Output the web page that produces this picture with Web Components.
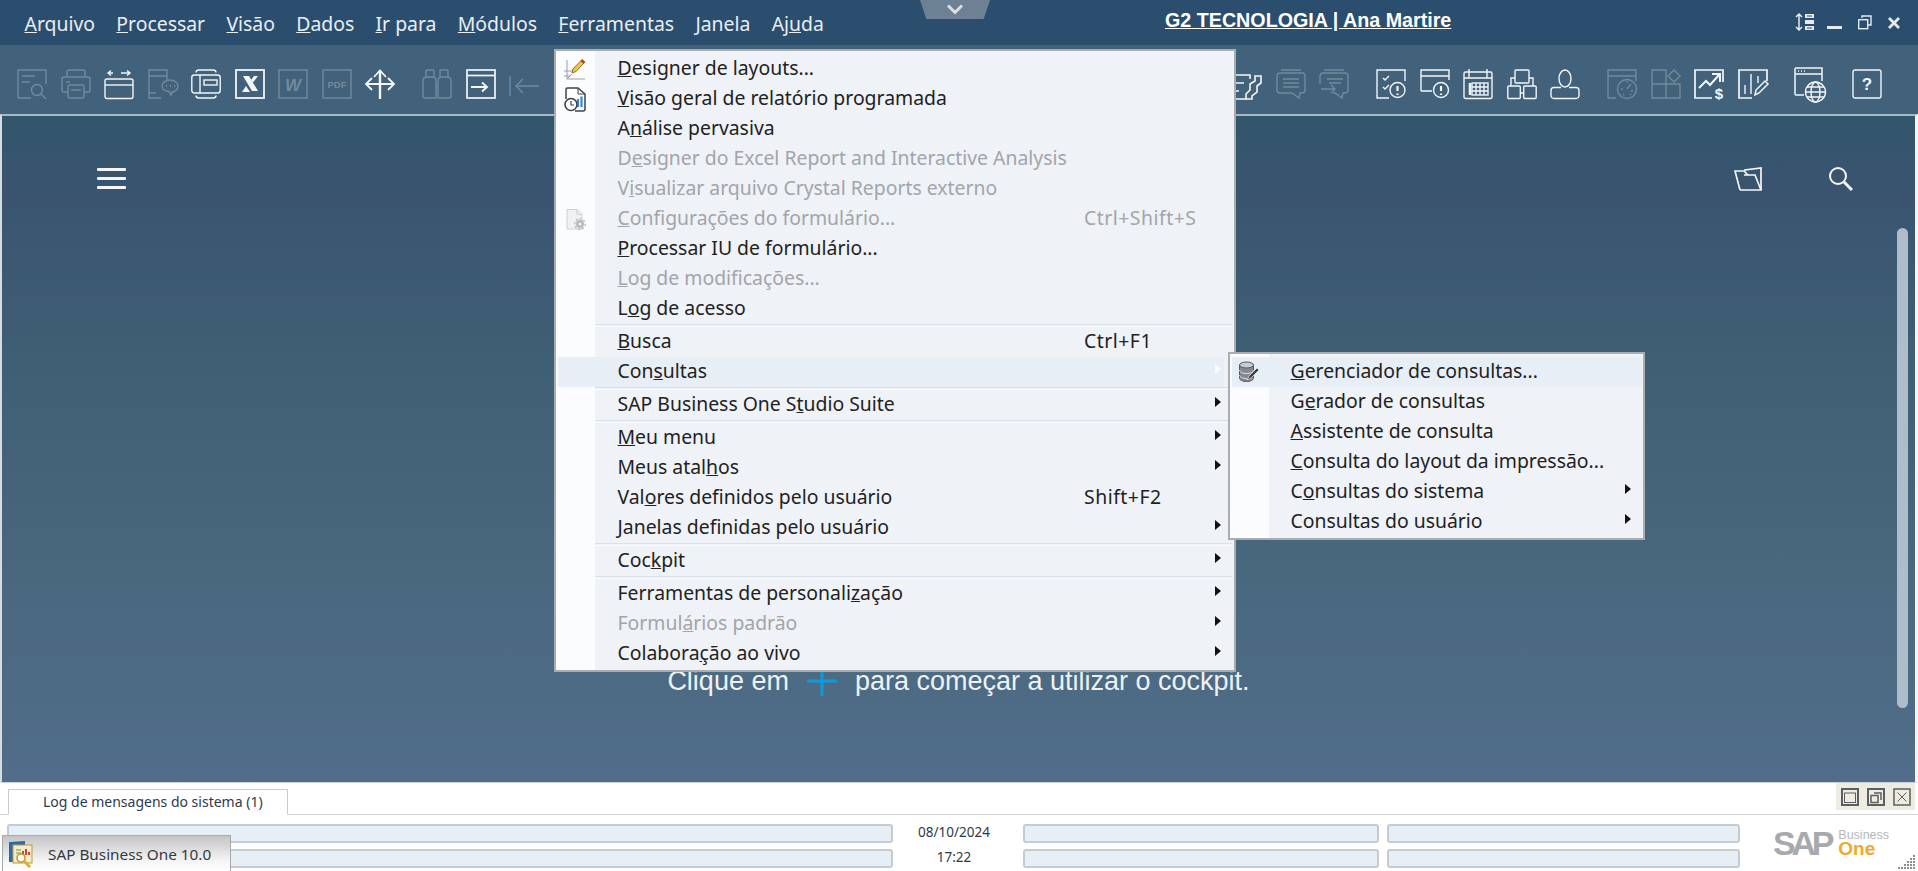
<!DOCTYPE html>
<html lang="pt-BR">
<head>
<meta charset="utf-8">
<title>SAP Business One 10.0</title>
<style>
	html, body { margin: 0; height: 100%; overflow: hidden; background: #fff; }
</style>
</head>
<body>
<sap-app>
	<sap-titlebar>
		<sap-menubar>
			<span><u>A</u>rquivo</span>
			<span><u>P</u>rocessar</span>
			<span><u>V</u>isão</span>
			<span><u>D</u>ados</span>
			<span><u>I</u>r para</span>
			<span><u>M</u>ódulos</span>
			<span><u>F</u>erramentas</span>
			<span><u>J</u>anela</span>
			<span>Aj<u>u</u>da</span>
		</sap-menubar>
	</sap-titlebar>

	<sap-toolbar>
		<sap-icon name="preview" off></sap-icon>
		<sap-icon name="printer" off></sap-icon>
		<sap-icon name="resize"></sap-icon>
		<sap-icon name="docchat" off></sap-icon>
		<sap-icon name="layout"></sap-icon>
		<sap-icon name="excel"></sap-icon>
		<sap-icon name="word" off></sap-icon>
		<sap-icon name="pdf" off></sap-icon>
		<sap-icon name="move"></sap-icon>
		<sap-tb-gap></sap-tb-gap>
		<sap-icon name="binoculars" off></sap-icon>
		<sap-icon name="goto"></sap-icon>
		<sap-icon name="first" off></sap-icon>
		<sap-tb-gap style="width:666px"></sap-tb-gap>
		<sap-icon name="wrench"></sap-icon>
		<sap-icon name="chat" off></sap-icon>
		<sap-icon name="chatsend" off></sap-icon>
		<sap-tb-gap></sap-tb-gap>
		<sap-icon name="checkalert"></sap-icon>
		<sap-icon name="windowalert"></sap-icon>
		<sap-icon name="calendar"></sap-icon>
		<sap-icon name="org"></sap-icon>
		<sap-icon name="person"></sap-icon>
		<sap-tb-gap></sap-tb-gap>
		<sap-icon name="gauge" off></sap-icon>
		<sap-icon name="blocks" off></sap-icon>
		<sap-icon name="chartmoney"></sap-icon>
		<sap-icon name="barspen"></sap-icon>
		<sap-tb-gap style="width:0"></sap-tb-gap>
		<sap-icon name="web"></sap-icon>
		<sap-tb-gap style="width:.5px"></sap-tb-gap>
		<sap-icon name="help"></sap-icon>
	</sap-toolbar>

	<sap-cockpit></sap-cockpit>

	<sap-statusbar>
		<span slot="tab">Log de mensagens do sistema (1)</span>
		<span slot="date">08/10/2024</span>
		<span slot="time">17:22</span>
	</sap-statusbar>

	<sap-taskitem>SAP Business One 10.0</sap-taskitem>

	<sap-menu style="left:554px;top:49px;width:678px;--cols:61.500px 466.500px 118px 32px;--hl-right:10px">
		<sap-menu-item>
			<svg slot="icon" width="24" height="23" viewBox="0 0 24 23" fill="none"><path d="M4 2v19h18M1 18h6M1 13h9M4 21l5-5" stroke="#9a9fa6"/><path d="M9 15l1-4L19 1.5l3 2.5-9 9.500z" fill="#f2c53c" stroke="#6f5a1e" stroke-width=".8"/><path d="M19 1.500l3 2.500-1.500 1.800-3-2.500z" fill="#b5412c"/></svg>
			<u>D</u>esigner de layouts...
		</sap-menu-item>
		<sap-menu-item>
			<svg slot="icon" width="24" height="25" viewBox="0 0 24 25" fill="none"><path d="M3 12V2.500A1.500 1.500 0 0 1 4.500 1H15l7 6v15a2 2 0 0 1-2 2h-8" stroke="#3f4347" stroke-width="1.500" fill="#fff"/><path d="M15 1v6h7" stroke="#3f4347"/><path d="M15 12v8M18.500 9.500V20" stroke="#3a86cf" stroke-width="2.200"/><circle cx="8" cy="17.500" r="6" fill="#fff" stroke="#3f4347" stroke-width="1.600"/><path d="M8 14v4h3" stroke="#3f4347" stroke-width="1.200"/></svg>
			<u>V</u>isão geral de relatório programada
		</sap-menu-item>
		<sap-menu-item>A<u>n</u>álise pervasiva</sap-menu-item>
		<sap-menu-item disabled>D<u>e</u>signer do Excel Report and Interactive Analysis</sap-menu-item>
		<sap-menu-item disabled>V<u>i</u>sualizar arquivo Crystal Reports externo</sap-menu-item>
		<sap-menu-item disabled shortcut="Ctrl+Shift+S">
			<svg slot="icon" width="24" height="23" viewBox="0 0 24 23" fill="none"><path d="M4 1.500h10l5 5V21H4z" fill="#f0f1f3" stroke="#cdd0d4"/><path d="M14 1.500v5h5" stroke="#cdd0d4"/><circle cx="17" cy="16" r="4" fill="#b7babf"/><circle cx="17" cy="16" r="5.300" stroke="#b7babf" stroke-width="1.400" stroke-dasharray="2 2"/><circle cx="17" cy="16" r="1.500" fill="#f0f1f3"/></svg>
			<u>C</u>onfigurações do formulário...
		</sap-menu-item>
		<sap-menu-item><u>P</u>rocessar IU de formulário...</sap-menu-item>
		<sap-menu-item disabled><u>L</u>og de modificações...</sap-menu-item>
		<sap-menu-item>L<u>o</u>g de acesso</sap-menu-item>
		<sap-menu-sep></sap-menu-sep>
		<sap-menu-item shortcut="Ctrl+F1"><u>B</u>usca</sap-menu-item>
		<sap-menu-item hover arrow>Con<u>s</u>ultas</sap-menu-item>
		<sap-menu-sep></sap-menu-sep>
		<sap-menu-item arrow>SAP Business One S<u>t</u>udio Suite</sap-menu-item>
		<sap-menu-sep></sap-menu-sep>
		<sap-menu-item arrow><u>M</u>eu menu</sap-menu-item>
		<sap-menu-item arrow>Meus atal<u>h</u>os</sap-menu-item>
		<sap-menu-item shortcut="Shift+F2">Val<u>o</u>res definidos pelo usuário</sap-menu-item>
		<sap-menu-item arrow><u>J</u>anelas definidas pelo usuário</sap-menu-item>
		<sap-menu-sep></sap-menu-sep>
		<sap-menu-item arrow>Coc<u>k</u>pit</sap-menu-item>
		<sap-menu-sep></sap-menu-sep>
		<sap-menu-item arrow>Ferramentas de personali<u>z</u>ação</sap-menu-item>
		<sap-menu-item disabled arrow>Formul<u>á</u>rios padrão</sap-menu-item>
		<sap-menu-item arrow>Colabora<u>ç</u>ão ao vivo</sap-menu-item>
	</sap-menu>

	<sap-menu style="left:1228px;top:352px;width:413px;--cols:60.500px 322.500px 0 30px;--hl-right:1px">
		<sap-menu-item hover>
			<svg slot="icon" width="22" height="22" viewBox="0 0 22 22" fill="none"><path d="M1.500 4v13c0 2 3 3.500 7 3.500s7-1.500 7-3.500V4" fill="#85898f" stroke="#55585c"/><ellipse cx="8.500" cy="4" rx="7" ry="3" fill="#c9ccd0" stroke="#55585c"/><path d="M1.500 9c0 2 3 3.500 7 3.500s7-1.500 7-3.500M1.500 14c0 2 3 3.500 7 3.500" stroke="#e3e5e8"/><path d="M9 19l2-4 8-8 2 2-8 8z" fill="#3c3f43" stroke="#f1f3f6" stroke-width=".7"/></svg>
			<u>G</u>erenciador de consultas...
		</sap-menu-item>
		<sap-menu-item>G<u>e</u>rador de consultas</sap-menu-item>
		<sap-menu-item><u>A</u>ssistente de consulta</sap-menu-item>
		<sap-menu-item><u>C</u>onsulta do layout da impressão...</sap-menu-item>
		<sap-menu-item arrow>C<u>o</u>nsultas do sistema</sap-menu-item>
		<sap-menu-item arrow>Consultas do usuário</sap-menu-item>
	</sap-menu>
</sap-app>

<script>
const SAP_ICONS = {
	preview: `<path d="M1 29V1h28v14M1 29h13M5 7h13M5 13h8"/><circle cx="20" cy="21" r="5.500"/><path d="M24 25l5 5"/>`,
	printer: `<path d="M6 8V3a2 2 0 0 1 2-2h14a2 2 0 0 1 2 2v5"/><path d="M7 23H3a2 2 0 0 1-2-2V10a2 2 0 0 1 2-2h24a2 2 0 0 1 2 2v11a2 2 0 0 1-2 2h-4"/><rect x="7" y="16" width="16" height="13" rx="1.500"/><path d="M5 13h4M10 21h10"/>`,
	resize: `<path d="M9 4H4M7 1.500L4 4l3 2.500M17 4h9M23 1.500L26 4l-3 2.500"/><rect x="1" y="10" width="28" height="19.500" rx="2"/><path d="M1 16h28"/>`,
	docchat: `<path d="M19 11V1H1v28h12M1 7h18M1 24h7"/><path d="M14 17c0-3.500 4-6 8-6s8 2.500 8 6-3 6-6 6l-1 3-2-3.500c-4-.5-7-2-7-5.500z"/><path d="M18 17h1M22 17h1M26 17h1" stroke-width="2"/>`,
	layout: `<rect x=".8" y="6" width="28.400" height="18" rx="2.500"/><path d="M5 3.500Q5 1 8 1h14q3 0 3 2.500M5 26.500Q5 29 8 29h14q3 0 3-2.500M9 6v18"/><rect x="13" y="11" width="13" height="5"/>`,
	excel: `<rect x="1" y="1" width="28" height="28" stroke-width="1.800"/><path d="M8 7h6l9 15h-6z" fill="currentColor" stroke="none"/><path d="M19 7h4l-5 6.500-2-2.500zM7 23l4-6 4 6z" fill="currentColor" stroke="none"/>`,
	word: `<rect x="1" y="1" width="28" height="28"/><text x="15" y="22" text-anchor="middle" font-family="Liberation Sans" font-size="17" font-weight="700" font-style="italic" fill="currentColor" stroke="none">W</text>`,
	pdf: `<rect x="1" y="1" width="28" height="28"/><text x="15" y="19" text-anchor="middle" font-family="Liberation Sans" font-size="9.500" font-weight="700" fill="currentColor" stroke="none">PDF</text>`,
	move: `<path d="M15 1v29" stroke-width="2.400"/><path d="M1.500 15h27M9 8l6-6.500L21 8M7 9l-6 6 6 6M23 9l6 6-6 6" stroke-width="1.800"/>`,
	binoculars: `<path d="M4 8V2a1 1 0 0 1 1-1h6a1 1 0 0 1 1 1v6M18 8V2a1 1 0 0 1 1-1h6a1 1 0 0 1 1 1v6"/><path d="M1 27V12q0-4 4-4h6q3 0 3 4v17H3a2 2 0 0 1-2-2zM29 27V12q0-4-4-4h-6q-3 0-3 4v17h11a2 2 0 0 0 2-2zM14 17h2"/>`,
	goto: `<rect x="1" y="1" width="28" height="28" stroke-width="1.700"/><path d="M1 6.500h28" stroke-width="1.700"/><path d="M5 18h15M16 13.500l5 4.500-5 4.500" stroke-width="1.900"/>`,
	first: `<path d="M1 7v20M7 17h23M14 10l-7 7 7 7"/>`,
	wrench: `<path d="M0 6h18v4M0 14h12M0 22h7M0 30h14" stroke-width="1.600"/><path d="M23 7h6v7l-4 3v6l-5 4v3h-6v-5l4-4v-6l5-3z" stroke-width="1.600"/>`,
	chat: `<path d="M4 4h22a3 3 0 0 1 3 3v14a3 3 0 0 1-3 3h-2l-1 5-7-5H4a3 3 0 0 1-3-3V7a3 3 0 0 1 3-3zM5 1h20M7 10h16M7 14h16M7 18h16"/>`,
	chatsend: `<path d="M4 4h22a3 3 0 0 1 3 3v14a3 3 0 0 1-3 3h-2l-1 5-7-5h-2M1 15V7a3 3 0 0 1 3-3M5 1h20M8 10h16M10 14h12M2 20h14M12 16l4 4-4 4"/>`,
	checkalert: `<path d="M13 29H1V1h28v11"/><path d="M7 9l2 2 4-4M7 18l2 2 4-4"/><circle cx="21.500" cy="21" r="7.500"/><path d="M21.500 17v5M21.500 24.500v1.500" stroke-width="2.200"/>`,
	windowalert: `<path d="M1 22V1h28v10M1 7h28M1 22h11"/><circle cx="21" cy="21" r="7.500"/><path d="M21 17v5M21 24.500v1.500" stroke-width="2.200"/>`,
	calendar: `<rect x="1" y="3" width="28" height="26.500" rx="1.500"/><path d="M1 9h28M6 0v9M24 0v9"/><rect x="9" y="14" width="16" height="12"/><path d="M13 14v12M17 14v12M21 14v12M9 18h16M9 22h16"/><path d="M7 14v12" stroke-width="2.500"/>`,
	org: `<rect x="8" y="1" width="14" height="13" rx="1"/><rect x=".8" y="17" width="12.500" height="12.500" rx="1"/><rect x="16.700" y="17" width="12.500" height="12.500" rx="1"/><path d="M8 9H4v8M22 9h4v8M13 24h4"/>`,
	person: `<ellipse cx="15" cy="9.500" rx="6" ry="8.500"/><path d="M11 18.500H4a3 3 0 0 0-3 3v5a3 3 0 0 0 3 3h22a3 3 0 0 0 3-3v-5a3 3 0 0 0-3-3h-7"/>`,
	gauge: `<path d="M1 29V1h28v11M1 7h28M1 29h8"/><circle cx="20" cy="20" r="9.500"/><path d="M20 20l4-5M14 20h2M24 22h2M20 12v2M16 26l1-1M24 26l-1-1"/>`,
	blocks: `<path d="M1 1h14v28H1zM1 15h28v14H15"/><path d="M23 1l6 6-6 6-6-6z"/>`,
	chartmoney: `<path d="M29 13V1H1v28h17" stroke-width="1.700"/><path d="M5 19l7-7 4 4 9-10M18 5h8v8" stroke-width="2"/><text x="25" y="30" text-anchor="middle" font-family="Liberation Sans" font-size="15" font-weight="700" fill="currentColor" stroke="none">$</text>`,
	barspen: `<path d="M29 12V1H1v28h13" stroke-width="1.700"/><path d="M7 16v9M13 5v20M20 7v7"/><path d="M17 26l1-5 9-9 3 3-9 9z" stroke-width="1.500"/>`,
	web: `<g transform="translate(-2 1)"><path d="M2 24V-1a1 1 0 0 1 1-1h26v13M2 4h27" stroke-width="1.500"/><path d="M5 1h1M8 1h1M11 1h1" stroke-width="1.500"/><path d="M2 24a1 1 0 0 0 1 1h8"/><circle cx="22.500" cy="22" r="10" fill="#42617a"/><ellipse cx="22.500" cy="22" rx="4.500" ry="10"/><path d="M12.500 22h20M14 17h17M14 27h17"/></g>`,
	help: `<rect x="1" y="1" width="28" height="28" rx="2"/><text x="15" y="21" text-anchor="middle" font-family="Liberation Sans" font-size="17" font-weight="700" fill="currentColor" stroke="none">?</text>`,
};

class SapElement extends HTMLElement {
	static tag = "";
	static css = "";
	static html = "<slot></slot>";
	static register() {
		customElements.define(this.tag, this);
	}
	constructor() {
		super();
		this.attachShadow({ mode: "open" });
		this.shadowRoot.innerHTML = `<style>${this.constructor.css}</style>${this.constructor.html}`;
	}
}

class SapApp extends SapElement {
	static tag = "sap-app";
	static css = `
		:host {
			display: flex;
			flex-direction: column;
			height: 871px;
			position: relative;
			overflow: hidden;
			font-family: "Noto Sans", "Open Sans", sans-serif;
		}
	`;
}

class SapTitlebar extends SapElement {
	static tag = "sap-titlebar";
	static css = `
		:host {
			display: grid;
			grid-template-columns: 1165px auto 1fr auto;
			align-items: start;
			height: 45px;
			flex: none;
			background: #2b4e6e;
			position: relative;
		}
		.title {
			color: #fff;
			font: 700 19.700px/1 "Liberation Sans", sans-serif;
			text-decoration: underline;
			margin-top: 11px;
			white-space: nowrap;
		}
		.handle {
			position: absolute;
			left: 920px;
			top: 0;
			width: 70px;
			height: 19px;
			background: #6c8194;
			clip-path: polygon(0 0, 100% 0, 91% 100%, 9% 100%);
		}
		.handle svg { display: block; margin: 4px auto 0; }
		.win {
			display: flex;
			grid-column: 4;
			align-items: flex-start;
			gap: 13px;
			padding: 13px 18px 0 0;
			color: #e6ebef;
		}
	`;
	static html = `
		<div><slot></slot></div>
		<div class="title">G2 TECNOLOGIA | Ana Martire</div>
		<div class="win">
			<svg width="19" height="18" viewBox="0 0 19 18" fill="none" stroke="currentColor"><path d="M4 1v16M1 4l3-3 3 3M1 14l3 3 3-3" stroke-width="1.500"/><path d="M10 1h9v4h-9zM10 7h9v4h-9zM10 13h9v4h-9z" fill="currentColor" stroke="none"/><path d="M12 3h5M12 15h5" stroke="#2b4e6e"/></svg>
			<svg width="15" height="18" viewBox="0 0 15 18" style="margin-right:3px"><rect y="13" width="15" height="3" fill="currentColor"/></svg>
			<svg width="14" height="16" viewBox="0 0 14 16" fill="none" stroke="currentColor" stroke-width="1.400" style="margin:2px 3px 0 0"><rect x=".7" y="4.700" width="9" height="9"/><path d="M4 3V1h9v9h-3"/></svg>
			<svg width="12" height="12" viewBox="0 0 12 12" fill="none" stroke="currentColor" stroke-width="2.800" style="margin:4px 0 0"><path d="M1 1l10 10M11 1L1 11"/></svg>
		</div>
		<div class="handle"><svg width="18" height="11" viewBox="0 0 18 11" fill="none" stroke="#d8dfe5" stroke-width="3"><path d="M2 1.500l7 7 7-7"/></svg></div>
	`;
}

class SapMenubar extends SapElement {
	static tag = "sap-menubar";
	static css = `
		:host {
			display: flex;
			gap: 21.300px;
			padding: 10px 0 0 24.500px;
			color: #e9eef2;
			font-size: 19.400px;
			line-height: 27px;
			white-space: nowrap;
		}
	`;
}

class SapToolbar extends SapElement {
	static tag = "sap-toolbar";
	static css = `
		:host {
			display: flex;
			align-items: flex-start;
			gap: 13.5px;
			height: 69px;
			flex: none;
			box-sizing: border-box;
			padding: 24px 0 0 17px;
			background: #42617a;
		}
	`;
}

class SapTbGap extends SapElement {
	static tag = "sap-tb-gap";
	static css = `:host { display: block; width: 0; flex: none; }`;
	static html = "";
}

class SapIcon extends SapElement {
	static tag = "sap-icon";
	static css = `
		:host { display: block; width: 30px; height: 30px; flex: none; color: #f3f6f8; }
		:host([off]) { color: #728a9c; }
		svg { display: block; overflow: visible; fill: none; stroke: currentColor; stroke-width: 1.400; }
	`;
	static html = "";
	connectedCallback() {
		const body = SAP_ICONS[this.getAttribute("name")] || "";
		this.shadowRoot.innerHTML = `<style>${SapIcon.css}</style><svg width="30" height="30" viewBox="0 0 30 30">${body}</svg>`;
	}
}

class SapCockpit extends SapElement {
	static tag = "sap-cockpit";
	static css = `
		:host {
			display: flex;
			flex-direction: column;
			flex: 1;
			min-height: 0;
			position: relative;
			box-sizing: border-box;
			border-top: 2px solid #a9b9c6;
			border-left: 2px solid #d5dde3;
			border-right: 3px solid #f4f6f8;
			border-bottom: 1px solid #c9d3dc;
			background: linear-gradient(#31566b 0, #3a5470 11%, #3f5f74 37%, #4b6980 75%, #516d8a 100%);
		}
		.top {
			display: flex;
			align-items: center;
			padding: 50px 62px 0 95px;
			color: #f4f6f8;
		}
		.top .menu { margin-right: auto; }
		.top .folder { margin-right: 66px; }
		.msg {
			display: flex;
			align-items: center;
			justify-content: center;
			gap: 18px;
			margin-top: auto;
			padding: 0 0 86px;
			color: #eef2f5;
			font: 27px/30px "Liberation Sans", sans-serif;
		}
		.scroll {
			position: absolute;
			right: 7px;
			top: 112px;
			bottom: 74px;
			width: 11px;
			border-radius: 6px;
			background: #aebdc9;
		}
	`;
	static html = `
		<div class="top">
			<svg class="menu" width="29" height="21" viewBox="0 0 29 21" fill="currentColor"><rect width="29" height="3" y="0" rx="1"/><rect width="29" height="3" y="9" rx="1"/><rect width="29" height="3" y="18" rx="1"/></svg>
			<svg class="folder" width="28" height="24" viewBox="0 0 28 24" fill="none" stroke="currentColor" stroke-width="1.700"><path d="M6 23L1 4h9l4 4"/><path d="M11 4V3L27 1v22H6"/><path d="M27 23L21 8H10"/></svg>
			<svg width="25" height="25" viewBox="0 0 25 25" fill="none" stroke="currentColor" stroke-width="2"><circle cx="10" cy="10" r="8"/><path d="M16 16l8 8" stroke-width="3"/></svg>
		</div>
		<div class="msg">
			<span>Clique em</span>
			<svg width="30" height="30" viewBox="0 0 30 30" fill="none" stroke="#0a9bdc" stroke-width="3"><path d="M15 0v30M0 15h30"/></svg>
			<span>para começar a utilizar o cockpit.</span>
		</div>
		<div class="scroll"></div>
	`;
}

class SapField extends SapElement {
	static tag = "sap-field";
	static css = `
		:host {
			display: block;
			height: 19px;
			box-sizing: border-box;
			background: #e6eef6;
			border: 2px solid #c5cbd0;
			border-radius: 3px;
		}
	`;
	static html = "";
}

class SapStatusbar extends SapElement {
	static tag = "sap-statusbar";
	static css = `
		:host {
			display: block;
			height: 88px;
			flex: none;
			background: #fff;
			position: relative;
			color: #2d3a4c;
			font-size: 14px;
		}
		.tabs {
			display: flex;
			justify-content: space-between;
			align-items: flex-start;
			height: 31px;
			border-bottom: 1px solid #d3d5d7;
			padding: 0 3px 0 8px;
		}
		.tab {
			box-sizing: border-box;
			width: 280px;
			height: 26px;
			margin-top: 6px;
			padding-left: 34px;
			line-height: 23px;
			background: #fff;
			border: 1px solid #c9cbcd;
			border-bottom: 1px solid #fff;
			white-space: nowrap;
		}
		.ctrl {
			display: flex;
			gap: 8px;
			height: 27px;
			padding: 5px 4px 0 5px;
			box-sizing: border-box;
			background: #eeebe1;
			color: #5a5f63;
		}
		.ctrl svg { display: block; }
		.fields {
			display: grid;
			grid-template-columns: 886px 130px 356px 353px 1fr;
			column-gap: 0;
			row-gap: 6px;
			padding: 9px 0 0 7px;
		}
		.when { text-align: center; line-height: 17px; padding-right: 8px; font-size: 13.500px; }
		.c4 { margin-left: 8px; width: 353px; }
		.logo {
			grid-column: 5;
			grid-row: 1 / span 2;
			display: flex;
			gap: 4px;
			padding: 6px 0 0 33px;
			margin-left: 8px;
		}
		.sap {
			font: 700 34px/26px "Liberation Sans", sans-serif;
			letter-spacing: -4.200px;
			color: #a7a9ac;
		}
		.side { display: flex; flex-direction: column; margin-left: 4px; }
		.biz { font: 12.500px/11px "Liberation Sans", sans-serif; color: #b4b6b8; }
		.one { font: 700 19px/16px "Liberation Sans", sans-serif; color: #f0a92a; }
		.grip { position: absolute; right: 3px; bottom: 1px; display: block; }
	`;
	static html = `
		<div class="tabs">
			<div class="tab"><slot name="tab"></slot></div>
			<div class="ctrl">
				<svg width="18" height="18" viewBox="0 0 18 18" fill="none" stroke="currentColor"><rect x="1" y="1" width="16" height="16" stroke-width="2"/><rect x="3.500" y="5" width="11" height="9.500"/></svg>
				<svg width="18" height="18" viewBox="0 0 18 18" fill="none" stroke="currentColor"><rect x="1" y="1" width="16" height="16" stroke-width="2"/><rect x="4" y="7.500" width="7" height="7" stroke-width="1.500"/><path d="M7 5h7v7" stroke-width="1.500"/></svg>
				<svg width="18" height="18" viewBox="0 0 18 18" fill="none" stroke="currentColor"><rect x="1" y="1" width="16" height="16" stroke-width="1.500"/><path d="M4.500 4.500l9 9M13.500 4.500l-9 9"/></svg>
			</div>
		</div>
		<div class="fields">
			<sap-field></sap-field>
			<div class="when"><slot name="date"></slot></div>
			<sap-field></sap-field>
			<sap-field class="c4"></sap-field>
			<div class="logo">
				<span class="sap">SAP</span>
				<div class="side"><span class="biz">Business</span><span class="one">One</span></div>
			</div>
			<sap-field></sap-field>
			<div class="when"><slot name="time"></slot></div>
			<sap-field></sap-field>
			<sap-field class="c4"></sap-field>
		</div>
		<svg class="grip" width="17" height="15" viewBox="0 0 17 15" fill="#8b8f93"><path d="M15 0h2v2h-2zM15 3h2v2h-2zM12 3h2v2h-2zM15 6h2v2h-2zM12 6h2v2h-2zM9 6h2v2H9zM15 9h2v2h-2zM12 9h2v2h-2zM9 9h2v2H9zM6 9h2v2H6zM15 12h2v2h-2zM12 12h2v2h-2zM9 12h2v2H9zM6 12h2v2H6zM3 12h2v2H3zM0 12h2v2H0z"/></svg>
	`;
}

class SapTaskitem extends SapElement {
	static tag = "sap-taskitem";
	static css = `
		:host {
			display: flex;
			align-items: center;
			gap: 13px;
			position: absolute;
			left: 2px;
			top: 835px;
			width: 229px;
			height: 36px;
			box-sizing: border-box;
			padding: 0 0 0 5px;
			background: linear-gradient(#c4c4c4, #f4f4f4 70%, #fff);
			border: 1px solid #a9a9a9;
			border-bottom: 0;
			color: #33393f;
			font-size: 15.300px;
			white-space: nowrap;
		}
		svg { flex: none; }
	`;
	static html = `
		<svg width="27" height="28" viewBox="0 0 27 28" fill="none"><path d="M1 2l16-1v4H5v17H1z" fill="#2f6aa8"/><rect x="5" y="5" width="19" height="18" fill="#f5ecc4" stroke="#b99a4a"/><path d="M15 15v-4M18 15v-6M21 15v-3" stroke-width="2" stroke="#c0473a"/><path d="M8 10h5M8 13h5" stroke="#7d8a55"/><circle cx="13" cy="18" r="4" fill="#fff" stroke="#c49a2c" stroke-width="1.600"/><path d="M16 21l6 6" stroke="#e0b030" stroke-width="3"/></svg>
		<slot></slot>
	`;
}

class SapMenu extends SapElement {
	static tag = "sap-menu";
	static css = `
		:host {
			display: block;
			position: absolute;
			border: 2px solid #a9adb2;
			padding: 3px 0 1px;
			background: linear-gradient(90deg, #fbfcfe 39px, #eff2f7 39px);
			color: #222;
			font-size: 19.400px;
		}
	`;
}

class SapMenuItem extends SapElement {
	static tag = "sap-menu-item";
	static css = `
		:host {
			display: grid;
			grid-template-columns: var(--cols);
			align-items: center;
			height: 30px;
			position: relative;
			white-space: nowrap;
			line-height: 26px;
		}
		:host([disabled]) { color: #a2a5a9; }
		.hl {
			display: none;
			position: absolute;
			left: 2px;
			right: var(--hl-right);
			top: 0;
			bottom: 0;
			background: #e7eef6;
		}
		:host([hover]) .hl { display: block; }
		.icon { display: flex; justify-content: center; width: 37px; position: relative; }
		.label, .key { position: relative; margin-bottom: 2px; }
		.key { letter-spacing: .5px; }
		.arrow { position: relative; justify-self: center; display: none; width: 0; height: 0; margin-bottom: 6px; border-style: solid; border-width: 5.500px 0 5.500px 6px; border-color: transparent transparent transparent #111; }
		:host([arrow]) .arrow { display: block; }
		:host([hover][arrow]) .arrow { border-left-color: #fbfcfe; }
	`;
	static html = `
		<div class="hl"></div>
		<div class="icon"><slot name="icon"></slot></div>
		<div class="label"><slot></slot></div>
		<div class="key"></div>
		<div class="arrow"></div>
	`;
	connectedCallback() {
		this.shadowRoot.querySelector(".key").textContent = this.getAttribute("shortcut") || "";
	}
}

class SapMenuSep extends SapElement {
	static tag = "sap-menu-sep";
	static css = `
		:host {
			display: block;
			height: 3px;
			box-sizing: border-box;
			margin: 0 2px 0 39px;
			border-top: 1px solid #d9e1eb;
			border-bottom: 1px solid #fafbfd;
		}
	`;
	static html = "";
}

[SapApp, SapTitlebar, SapMenubar, SapToolbar, SapTbGap, SapIcon, SapCockpit, SapField, SapStatusbar, SapTaskitem, SapMenu, SapMenuItem, SapMenuSep].forEach((c) => c.register());
</script>
</body>
</html>
